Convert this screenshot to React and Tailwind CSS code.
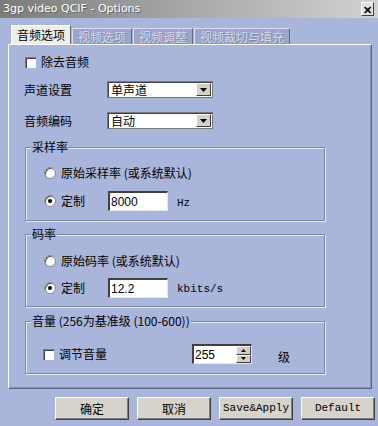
import React from "react";

const cjk = { fontFamily: '"Noto Sans CJK SC", "Liberation Sans", sans-serif' };
const mono = { fontFamily: '"Liberation Mono", monospace' };

function Check({ checked }) {
  return (
    <span className="w-[11px] h-[11px] bg-white border-t border-l border-[#808080] border-r-[#f0f0f0] border-b-[#f0f0f0] shadow-[inset_1px_1px_0_#404040] shrink-0 flex items-center justify-center">
      {checked && <span className="text-[9px] leading-none">✓</span>}
    </span>
  );
}

function Radio({ checked }) {
  return (
    <span className="w-[12px] h-[12px] rounded-full bg-white border border-[#8c8c8c] shadow-[inset_1px_1px_0_#5a5a5a] shrink-0 flex items-center justify-center">
      {checked && <span className="w-[4px] h-[4px] rounded-full bg-black" />}
    </span>
  );
}

function Select({ value }) {
  return (
    <div className="w-[106px] h-[17px] bg-white border border-[#7a7a7a] shadow-[inset_1px_1px_0_#404040] flex items-center">
      <span className="flex-1 pl-[3px] text-[12px] leading-none text-black" style={cjk}>{value}</span>
      <span className="w-[15px] h-[13px] mr-[1px] bg-[#d4d0c8] border border-t-white border-l-white border-r-[#404040] border-b-[#404040] flex items-center justify-center">
        <svg width="7" height="4" viewBox="0 0 7 4"><path d="M0 0h7L3.5 4z" fill="#000" /></svg>
      </span>
    </div>
  );
}

function Field({ value, w = "w-[60px]" }) {
  return (
    <div className={`${w} h-[20px] bg-white border-t-2 border-l-2 border-t-[#404040] border-l-[#404040] border-r border-b border-r-[#e8e8e8] border-b-[#e8e8e8] flex items-center pl-[1px] text-[12px] text-black`} style={{ fontFamily: '"Liberation Sans", sans-serif' }}>
      {value}
    </div>
  );
}

function Group({ title, h, children }) {
  return (
    <div className={`relative ml-[16px] w-[300px] ${h} border border-[#7d86a0] shadow-[1px_1px_0_#e8ecf8,inset_1px_1px_0_#e8ecf8]`}>
      <span className="absolute left-[5px] top-[-9px] px-[1px] bg-[#a9b5db] text-[12px] leading-[16px] text-black" style={cjk}>{title}</span>
      {children}
    </div>
  );
}

function Btn({ label, m }) {
  return (
    <div className={`w-[74px] h-[23px] bg-[#d6d3cb] border border-t-white border-l-white border-r-[#404040] border-b-[#404040] shadow-[inset_-1px_-1px_0_#808080] flex items-center justify-center ${m ? "text-[11px]" : "text-[12px]"} text-black`} style={m ? mono : cjk}>
      {label}
    </div>
  );
}

export default function App() {
  return (
    <div className="w-[378px] h-[426px] bg-[#a9b5db] overflow-hidden flex flex-col">
      <div className="h-[18px] bg-gradient-to-r from-[#7c7c7c] via-[#a8a8a8] to-[#d2d2d2] flex items-center justify-between pl-[3px] pr-[4px]">
        <span className="text-[11px] text-white [text-shadow:1px_1px_0_#666]" style={{ fontFamily: '"DejaVu Sans", sans-serif' }}>3gp video QCIF - Options</span>
        <span className="w-[13px] h-[14px] bg-[#e0e0e0] border border-t-white border-l-white border-r-[#404040] border-b-[#404040] flex items-center justify-center text-[11px] leading-none font-bold text-black">✕</span>
      </div>

      <div className="flex items-end h-[26px] pl-[11px]">
        <div className="h-[19px] px-[5px] bg-[#efeeea] border border-b-0 border-t-white border-l-white border-r-[#6b6b6b] flex items-center text-[12px] text-black" style={cjk}>音频选项</div>
        {["视频选项", "视频调整", "视频裁切与填充"].map((t) => (
          <div key={t} className="h-[16px] ml-[1px] px-[5px] bg-[#9ba6cb] border border-b-0 border-t-[#d8def0] border-l-[#d8def0] border-r-[#5f6782] flex items-center text-[12px] text-[#d4daee] [text-shadow:1px_1px_0_#7d87a8]" style={cjk}>{t}</div>
        ))}
      </div>

      <div className="ml-[8px] w-[364px] h-[345px] border border-t-white border-l-white border-r-[#5d6582] border-b-[#5d6582] shadow-[inset_-1px_-1px_0_#8891ad] flex flex-col text-black" style={cjk}>
        <div className="flex items-center mt-[11px] ml-[16px] h-[12px] gap-[5px] text-[12px]">
          <Check />
          <span>除去音频</span>
        </div>
        <div className="flex items-center mt-[13px] ml-[15px] h-[17px] text-[12px]">
          <span className="w-[83px]">声道设置</span>
          <Select value="单声道" />
        </div>
        <div className="flex items-center mt-[14px] ml-[15px] h-[17px] text-[12px]">
          <span className="w-[83px]">音频编码</span>
          <Select value="自动" />
        </div>

        <div className="mt-[18px]">
          <Group title="采样率" h="h-[74px]">
            <div className="flex items-center mt-[16px] ml-[18px] gap-[5px] text-[12px]">
              <Radio />
              <span>原始采样率 (或系统默认)</span>
            </div>
            <div className="flex items-center mt-[9px] ml-[18px] text-[12px]">
              <Radio checked />
              <span className="ml-[5px] w-[47px]">定制</span>
              <Field value="8000" />
              <span className="ml-[9px] mt-[4px] text-[11px]" style={mono}>Hz</span>
            </div>
          </Group>
        </div>

        <div className="mt-[13px]">
          <Group title="码率" h="h-[73px]">
            <div className="flex items-center mt-[17px] ml-[18px] gap-[5px] text-[12px]">
              <Radio />
              <span>原始码率 (或系统默认)</span>
            </div>
            <div className="flex items-center mt-[8px] ml-[18px] text-[12px]">
              <Radio checked />
              <span className="ml-[5px] w-[47px]">定制</span>
              <Field value="12.2" />
              <span className="ml-[9px] mt-[2px] text-[11px]" style={mono}>kbits/s</span>
            </div>
          </Group>
        </div>

        <div className="mt-[14px]">
          <Group title="音量 (256为基准级 (100-600))" h="h-[53px]">
            <div className="flex items-center mt-[20px] ml-[17px] text-[12px]">
              <Check />
              <span className="ml-[5px] w-[133px]">调节音量</span>
              <div className="w-[60px] h-[20px] bg-white border-t-2 border-l-2 border-t-[#404040] border-l-[#404040] border-r border-b border-r-[#e8e8e8] border-b-[#e8e8e8] flex items-center" style={{ fontFamily: '"Liberation Sans", sans-serif' }}>
                <span className="flex-1 pl-[1px] text-[12px]">255</span>
                <div className="w-[15px] h-full flex flex-col">
                  <span className="flex-1 bg-[#d4d0c8] border border-t-white border-l-white border-r-[#404040] border-b-[#404040] flex items-center justify-center">
                    <svg width="5" height="3" viewBox="0 0 5 3"><path d="M0 3h5L2.5 0z" fill="#000" /></svg>
                  </span>
                  <span className="flex-1 bg-[#d4d0c8] border border-t-white border-l-white border-r-[#404040] border-b-[#404040] flex items-center justify-center">
                    <svg width="5" height="3" viewBox="0 0 5 3"><path d="M0 0h5L2.5 3z" fill="#000" /></svg>
                  </span>
                </div>
              </div>
              <span className="ml-[26px] mt-[6px]">级</span>
            </div>
          </Group>
        </div>
      </div>

      <div className="flex mt-[8px] ml-[55px] gap-[8px]">
        <Btn label="确定" />
        <Btn label="取消" />
        <Btn label="Save&Apply" m />
        <Btn label="Default" m />
      </div>
    </div>
  );
}
